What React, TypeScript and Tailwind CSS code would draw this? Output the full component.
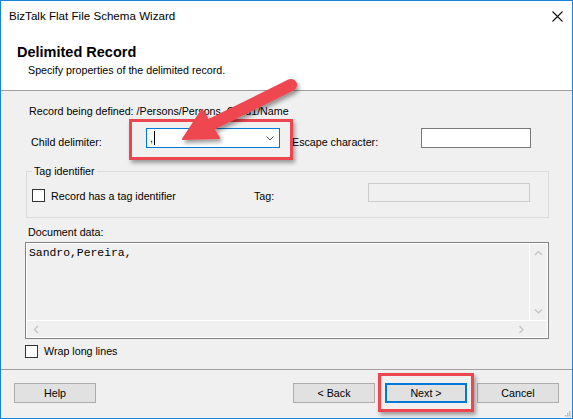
import React from 'react';

const sans = "font-['Liberation_Sans',Arial,sans-serif]";

const Checkbox = () => (
  <span className="block w-[13px] h-[13px] border border-[#333333] bg-white shrink-0" />
);

const WizardButton = ({ label, focused }: { label: string; focused?: boolean }) => (
  <button
    className={`w-[82px] h-[20px] bg-[#e1e1e1] flex items-center justify-center leading-none text-black ${
      focused ? 'border-2 border-[#0078d7]' : 'border border-[#adadad]'
    }`}
  >
    {label}
  </button>
);

// tiny chevrons used by the disabled scrollbars
const Chevron = ({ dir }: { dir: 'up' | 'down' | 'left' | 'right' }) => {
  const d = {
    up: 'M1 5 L4.5 1.5 L8 5',
    down: 'M1 1.5 L4.5 5 L8 1.5',
    left: 'M5 1 L1.5 4.5 L5 8',
    right: 'M1.5 1 L5 4.5 L1.5 8',
  }[dir];
  const horizontal = dir === 'up' || dir === 'down';
  return (
    <svg
      width={horizontal ? 9 : 7}
      height={horizontal ? 7 : 9}
      viewBox={horizontal ? '0 0 9 7' : '0 0 7 9'}
      fill="none"
      stroke="#c2c2c2"
      strokeWidth="1.2"
    >
      <path d={d} />
    </svg>
  );
};

export default function App() {
  return (
    <div
      className={`relative w-[573px] h-[419px] border border-[#1883d7] bg-[#f0f0f0] flex flex-col overflow-hidden text-[10.7px] text-black ${sans}`}
    >
      {/* Title bar */}
      <div className="h-[30px] bg-white flex items-center pl-[8px] pr-[9px] shrink-0">
        <span className="text-[11.6px] leading-none">BizTalk Flat File Schema Wizard</span>
        <svg className="ml-auto" width="11" height="11" viewBox="0 0 11 11" stroke="#111" strokeWidth="1.1">
          <path d="M0.5 0.5 L10.5 10.5 M10.5 0.5 L0.5 10.5" />
        </svg>
      </div>

      {/* Page header */}
      <div className="h-[60px] bg-white border-b border-[#a0a0a0] pt-[12px] pl-[16px] shrink-0">
        <div className="text-[14.5px] font-bold leading-[18px]">Delimited Record</div>
        <div className="mt-[3px] ml-[11px] leading-[13px]">Specify properties of the delimited record.</div>
      </div>

      {/* Body */}
      <div className="flex-1 flex flex-col">
        <div className="mt-[13px] ml-[28px] leading-[14px]">
          Record being defined: /Persons/Persons_Child1/Name
        </div>

        <div className="mt-[10px] flex items-start h-[20px]">
          <span className="ml-[30px] mt-[7px] w-[115px] leading-[14px] shrink-0">Child delimiter:</span>
          <div className="w-[134px] h-[20px] bg-white border border-[#0078d7] flex items-center pl-[3px] pr-[5px] shrink-0">
            <span className="leading-none">,</span>
            <span className="w-px h-[14px] bg-black ml-[1px]" />
            <svg className="ml-auto" width="8" height="5" viewBox="0 0 8 5" fill="none" stroke="#555" strokeWidth="1">
              <path d="M0.5 0.5 L4 4 L7.5 0.5" />
            </svg>
          </div>
          <span className="ml-[12px] mt-[7px] w-[129px] leading-[14px] shrink-0">Escape character:</span>
          <div className="w-[110px] h-[20px] bg-white border border-[#7a7a7a] shrink-0" />
        </div>

        <fieldset className="mt-[16px] ml-[25px] w-[523px] border border-[#dcdcdc] pb-[15px]">
          <legend className="ml-[5px] px-[2px] leading-[14px]">Tag identifier</legend>
          <div className="mt-[5px] flex items-start h-[19px]">
            <div className="w-[227px] flex items-start shrink-0">
              <span className="ml-[5px] mt-[6px]">
                <Checkbox />
              </span>
              <span className="ml-[6px] mt-[6px] leading-[14px]">Record has a tag identifier</span>
            </div>
            <span className="w-[114px] mt-[6px] leading-[14px] shrink-0">Tag:</span>
            <div className="w-[162px] h-[19px] border border-[#cccccc] bg-[#f0f0f0] shrink-0" />
          </div>
        </fieldset>

        <div className="mt-[7px] ml-[27px] leading-[14px]">Document data:</div>

        {/* Read-only document view with disabled scrollbars */}
        <div className="mt-[3px] ml-[24px] w-[524px] h-[97px] border border-[#828282] shrink-0">
          <div className="w-full h-full border border-white flex flex-col">
            <div className="flex-1 flex">
              <div className="flex-1 pl-[2px] pt-[3px] font-['Liberation_Mono','Courier_New',monospace] text-[11.4px] leading-[13px]">
                Sandro,Pereira,
              </div>
              <div className="w-[18px] border-l border-white flex flex-col items-center justify-between pt-[6px] pb-[5px]">
                <Chevron dir="up" />
                <Chevron dir="down" />
              </div>
            </div>
            <div className="h-[17px] flex border-t border-white">
              <div className="flex-1 flex items-center justify-between pl-[6px] pr-[4px]">
                <Chevron dir="left" />
                <Chevron dir="right" />
              </div>
              <div className="w-[18px]" />
            </div>
          </div>
        </div>

        <div className="mt-[5px] ml-[24px] flex items-center">
          <Checkbox />
          <span className="ml-[6px] leading-[14px]">Wrap long lines</span>
        </div>
      </div>

      {/* Footer buttons */}
      <div className="h-[49px] border-t border-[#a0a0a0] pt-[13px] pl-[13px] pr-[13px] flex items-start shrink-0">
        <WizardButton label="Help" />
        <div className="ml-auto flex gap-[10px]">
          <WizardButton label="< Back" />
          <WizardButton label="Next >" focused />
          <WizardButton label="Cancel" />
        </div>
      </div>

      {/* size grip */}
      <svg className="absolute right-[1px] bottom-[1px]" width="7" height="7" viewBox="0 0 7 7" fill="#b5b5b5">
        <rect x="5" y="1" width="1.5" height="1.5" />
        <rect x="3" y="3" width="1.5" height="1.5" />
        <rect x="5" y="3" width="1.5" height="1.5" />
        <rect x="1" y="5" width="1.5" height="1.5" />
        <rect x="3" y="5" width="1.5" height="1.5" />
        <rect x="5" y="5" width="1.5" height="1.5" />
      </svg>

      {/* Callout highlights */}
      <div className="absolute left-[128px] top-[118px] w-[164px] h-[41px] border-[3px] border-[#ee4650] shadow-[2px_3px_4px_rgba(0,0,0,0.35)] pointer-events-none" />
      <div className="absolute left-[377px] top-[372px] w-[96px] h-[39px] border-[3px] border-[#ee4650] shadow-[2px_3px_4px_rgba(0,0,0,0.35)] pointer-events-none" />

      <svg
        className="absolute left-[-1px] top-[-1px] pointer-events-none"
        width="573"
        height="419"
        viewBox="0 0 573 419"
      >
        <defs>
          <filter id="arrowShadow" x="-20%" y="-20%" width="140%" height="160%">
            <feDropShadow dx="2" dy="3" stdDeviation="2" floodColor="#000" floodOpacity="0.4" />
          </filter>
        </defs>
        <g filter="url(#arrowShadow)" fill="#ee4650" stroke="#ee4650">
          <line x1="291" y1="85" x2="208" y2="126" strokeWidth="12" strokeLinecap="round" />
          <polygon points="183,139 202,110 219,138" strokeWidth="2" strokeLinejoin="round" />
        </g>
      </svg>
    </div>
  );
}
